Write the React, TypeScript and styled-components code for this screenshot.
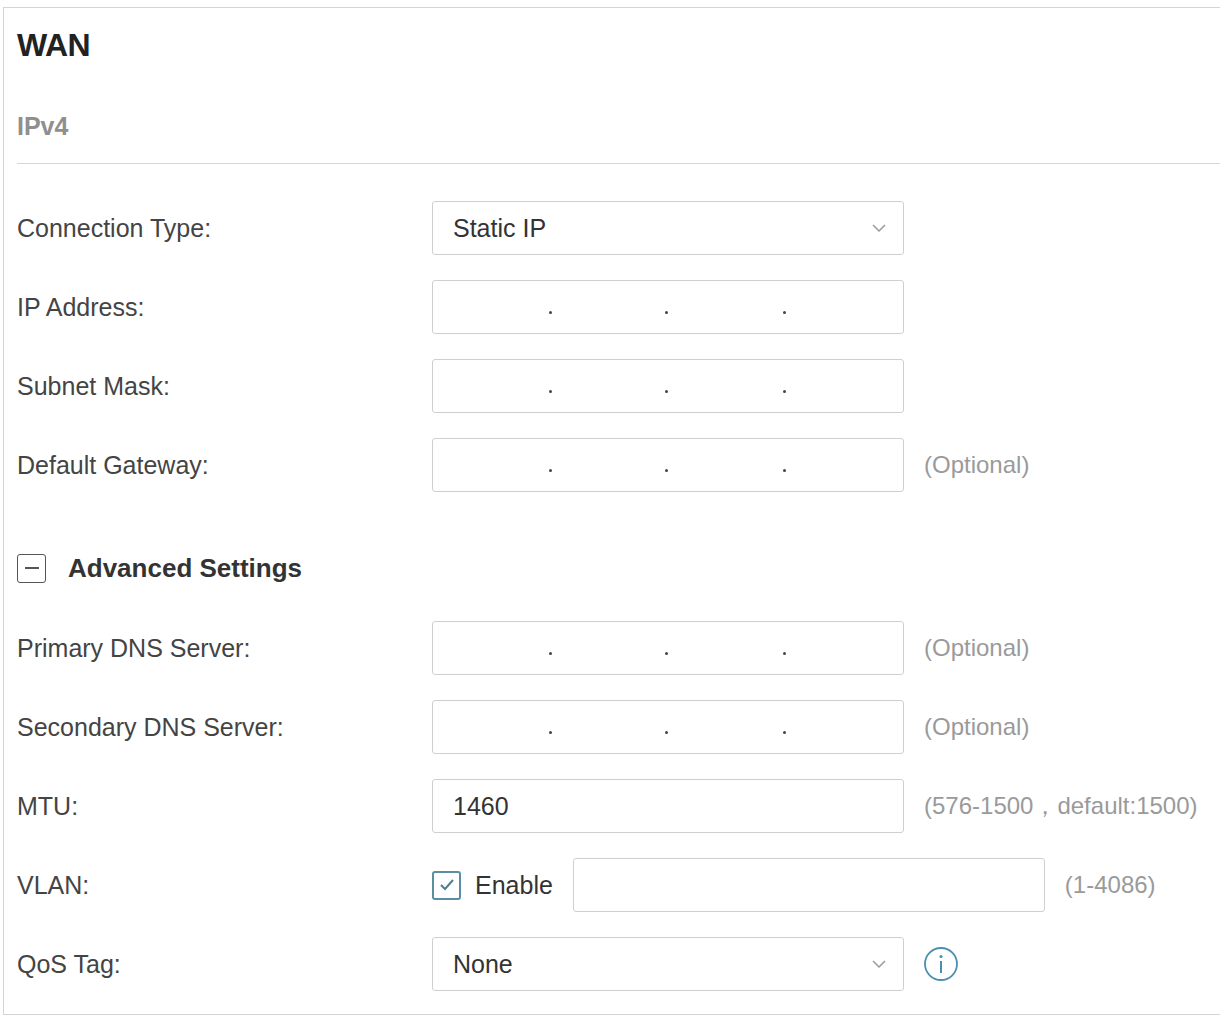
import React from 'react';
import styled, { createGlobalStyle } from 'styled-components';

const Global = createGlobalStyle`
  body { margin: 0; background: #fff; font-family: 'Liberation Sans', Arial, sans-serif; }
`;

const Panel = styled.div`
  margin: 7px 0 0 3px;
  height: 1008px;
  box-sizing: border-box;
  border: 1.5px solid #d4d4d4;
  border-right: none;
  padding: 0 0 0 13px;
  overflow: hidden;
`;

const Title = styled.h1`
  margin: 0;
  padding-top: 19px;
  height: 57px;
  font-size: 32px;
  font-weight: bold;
  color: #222;
  letter-spacing: -0.5px;
`;

const Sub = styled.div`
  padding-top: 28px;
  height: 51px;
  font-size: 25px;
  font-weight: bold;
  color: #8f8f8f;
  border-bottom: 1.5px solid #d6d6d6;
`;

const Form = styled.div`
  padding-top: 37px;
  display: flex;
  flex-direction: column;
`;

const Row = styled.div<{ $gap?: number }>`
  display: flex;
  align-items: center;
  height: 54px;
  margin-bottom: ${(p) => p.$gap ?? 25}px;
`;

const Label = styled.div`
  width: 415px;
  font-size: 25px;
  color: #444;
`;

const Field = styled.div<{ $w?: number }>`
  width: ${(p) => p.$w ?? 472}px;
  height: 54px;
  box-sizing: border-box;
  border: 1.5px solid #cfcfcf;
  border-radius: 3px;
  display: flex;
  align-items: center;
  padding: 0 20px;
  font-size: 25px;
  color: #333;
  position: relative;
`;

const Dot = styled.span<{ $x: number }>`
  position: absolute;
  left: ${(p) => p.$x}px;
  top: 30px;
  width: 3px;
  height: 3px;
  border-radius: 50%;
  background: #444;
`;

const Hint = styled.div`
  margin-left: 20px;
  font-size: 24px;
  color: #9a9a9a;
`;

const Chevron = styled.svg`
  position: absolute;
  right: 16px;
  top: 20px;
`;

const Section = styled.div`
  display: flex;
  align-items: center;
  gap: 22px;
  height: 54px;
  margin: 49px 0 26px;
  font-size: 26px;
  font-weight: bold;
  color: #333;
`;

const Box = styled.span`
  width: 29px;
  height: 29px;
  box-sizing: border-box;
  border: 1.5px solid #555;
  border-radius: 3px;
  display: flex;
  align-items: center;
  justify-content: center;
  &::after { content: ''; width: 14px; height: 2px; background: #555; }
`;

const Check = styled.span`
  width: 29px;
  height: 29px;
  box-sizing: border-box;
  border: 2px solid #5a8fa3;
  border-radius: 3px;
  display: flex;
  align-items: center;
  justify-content: center;
  margin-right: 14px;
`;

const CheckText = styled.span`
  font-size: 25px;
  color: #333;
  margin-right: 20px;
`;

const IpField = () => (
  <Field>
    <Dot $x={116} />
    <Dot $x={232} />
    <Dot $x={350} />
  </Field>
);

const Select = ({ value }: { value: string }) => (
  <Field>
    {value}
    <Chevron width="16" height="12" viewBox="0 0 16 12">
      <path d="M2 3l6 6 6-6" fill="none" stroke="#999" strokeWidth="1.5" />
    </Chevron>
  </Field>
);

const App: React.FC = () => (
  <>
    <Global />
    <Panel>
      <Title>WAN</Title>
      <Sub>IPv4</Sub>
      <Form>
        <Row><Label>Connection Type:</Label><Select value="Static IP" /></Row>
        <Row><Label>IP Address:</Label><IpField /></Row>
        <Row><Label>Subnet Mask:</Label><IpField /></Row>
        <Row $gap={0}><Label>Default Gateway:</Label><IpField /><Hint>(Optional)</Hint></Row>
        <Section><Box />Advanced Settings</Section>
        <Row><Label>Primary DNS Server:</Label><IpField /><Hint>(Optional)</Hint></Row>
        <Row><Label>Secondary DNS Server:</Label><IpField /><Hint>(Optional)</Hint></Row>
        <Row><Label>MTU:</Label><Field>1460</Field><Hint>(576-1500，default:1500)</Hint></Row>
        <Row>
          <Label>VLAN:</Label>
          <Check>
            <svg width="18" height="16" viewBox="0 0 18 16"><path d="M3 8l4 4 8-9" fill="none" stroke="#4a7f94" strokeWidth="2" /></svg>
          </Check>
          <CheckText>Enable</CheckText>
          <Field $w={472} />
          <Hint>(1-4086)</Hint>
        </Row>
        <Row>
          <Label>QoS Tag:</Label>
          <Select value="None" />
          <svg width="38" height="38" viewBox="0 0 38 38" style={{ marginLeft: 18 }}>
            <circle cx="19" cy="19" r="16" fill="none" stroke="#4a8fb0" strokeWidth="1.8" />
            <circle cx="19" cy="11.5" r="1.6" fill="#4a8fb0" />
            <path d="M19 16v12" stroke="#4a8fb0" strokeWidth="2" />
          </svg>
        </Row>
      </Form>
    </Panel>
  </>
);

export default App;
